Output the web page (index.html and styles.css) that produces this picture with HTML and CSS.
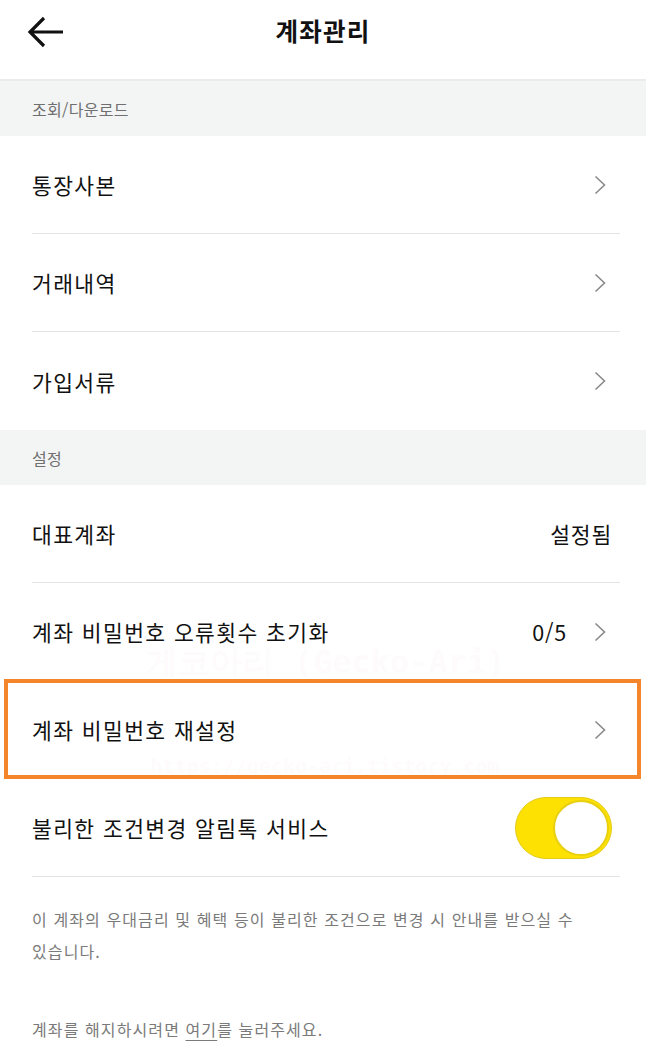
FILE: index.html
```html
<!DOCTYPE html>
<html lang="ko">
<head>
<meta charset="utf-8">
<title>계좌관리</title>
<link rel="stylesheet" href="styles.css">
</head>
<body>
<div class="page">
  <header class="topbar">
    <button class="back" aria-label="뒤로">
      <svg width="36" height="32" viewBox="0 0 36 32"><path d="M36 16H3M17 2L3 16l14 14" fill="none" stroke="#111" stroke-width="3.2"/></svg>
    </button>
    <h1 class="title">계좌관리</h1>
  </header>

  <div class="section-head">조회/다운로드</div>
  <ul class="list">
    <li class="row"><span class="label">통장사본</span><span class="right"><svg class="chev" width="12" height="20" viewBox="0 0 12 20"><path d="M1.5 1.5l9 8.5-9 8.5" fill="none" stroke="#8a8a8a" stroke-width="1.6"/></svg></span></li>
    <li class="row"><span class="label">거래내역</span><span class="right"><svg class="chev" width="12" height="20" viewBox="0 0 12 20"><path d="M1.5 1.5l9 8.5-9 8.5" fill="none" stroke="#8a8a8a" stroke-width="1.6"/></svg></span></li>
    <li class="row"><span class="label">가입서류</span><span class="right"><svg class="chev" width="12" height="20" viewBox="0 0 12 20"><path d="M1.5 1.5l9 8.5-9 8.5" fill="none" stroke="#8a8a8a" stroke-width="1.6"/></svg></span></li>
  </ul>

  <div class="section-head">설정</div>
  <ul class="list">
    <li class="row"><span class="label">대표계좌</span><span class="right plain"><span class="value">설정됨</span></span></li>
    <li class="row"><span class="label">계좌 비밀번호 오류횟수 초기화</span><span class="right"><span class="value">0/5</span><svg class="chev" width="12" height="20" viewBox="0 0 12 20"><path d="M1.5 1.5l9 8.5-9 8.5" fill="none" stroke="#8a8a8a" stroke-width="1.6"/></svg></span></li>
    <li class="row highlighted"><span class="label">계좌 비밀번호 재설정</span><span class="right"><svg class="chev" width="12" height="20" viewBox="0 0 12 20"><path d="M1.5 1.5l9 8.5-9 8.5" fill="none" stroke="#8a8a8a" stroke-width="1.6"/></svg></span></li>
    <li class="row"><span class="label">불리한 조건변경 알림톡 서비스</span><span class="toggle"><span class="knob"></span></span></li>
  </ul>

  <div class="notes">
    <p class="note">이 계좌의 우대금리 및 혜택 등이 불리한 조건으로 변경 시 안내를 받으실 수 있습니다.</p>
    <p class="note last">계좌를 해지하시려면 <span class="link">여기</span>를 눌러주세요.</p>
  </div>

  <div class="wm wm1">게코아리 (Gecko-Ari)</div>
  <div class="wm wm2">https://gecko-ari.tistory.com</div>
</div>
</body>
</html>
```
FILE: styles.css
```css
* { box-sizing: border-box; }
html, body { margin: 0; padding: 0; background: #fff; }
body {
  font-family: "Noto Sans CJK KR", "Noto Sans", "Liberation Sans", sans-serif;
  color: #111;
}
.page { position: relative; width: 646px; min-height: 1048px; overflow: hidden; }

.topbar {
  position: relative;
  height: 81px;
  display: flex;
  align-items: center;
  justify-content: center;
  border-bottom: 2px solid #ebebeb;
}
.back {
  position: absolute;
  left: 27px;
  top: 16px;
  padding: 0;
  border: 0;
  background: none;
  display: flex;
}
.title {
  margin: 0 0 18px;
  font-size: 24.5px;
  font-weight: 700;
  letter-spacing: 1.2px;
}

.section-head {
  height: 55px;
  background: #f3f4f4;
  padding-left: 32px;
  display: flex;
  align-items: center;
  font-size: 16px;
  color: #6f6f6f;
  letter-spacing: 0.3px;
}

.list { list-style: none; margin: 0; padding: 0; }
.row {
  height: 98px;
  margin: 0 26px 0 32px;
  display: flex;
  align-items: center;
  justify-content: space-between;
  border-bottom: 1.5px solid #e4e4e4;
  position: relative;
}
.list .row:last-child { border-bottom: 0; }
.list:last-of-type .row:last-child { border-bottom: 1.5px solid #e4e4e4; }
.label { font-size: 21.5px; font-weight: 400; letter-spacing: 1.4px; color: #111; }
.right { display: flex; align-items: center; gap: 27px; padding-right: 14px; }
.right.plain { padding-right: 8px; }
.value { font-size: 21.5px; font-weight: 400; letter-spacing: 0.8px; }

.highlighted::before {
  content: "";
  position: absolute;
  left: -28px;
  right: -21px;
  top: -2px;
  bottom: -1px;
  border: 4px solid #f5852b;
  pointer-events: none;
}

.toggle {
  width: 97px;
  height: 62px;
  border-radius: 31px;
  background: #fde102;
  border: 1.5px solid #e4cb1a;
  margin-right: 8px;
  display: flex;
  align-items: center;
  justify-content: flex-end;
  padding-right: 2px;
}
.knob {
  width: 56px;
  height: 56px;
  border-radius: 50%;
  background: #fff;
  border: 2px solid #e8cf10;
}

.notes { padding: 26px 32px 0; }
.note {
  margin: 0;
  font-size: 16px;
  line-height: 32px;
  color: #7a7a7a;
  letter-spacing: 1.1px;
  word-break: keep-all;
  padding-right: 20px;
}
.note.last { margin-top: 46px; }
.link { text-decoration: underline; text-underline-offset: 4px; }

.wm {
  position: absolute;
  left: 0;
  right: 0;
  text-align: center;
  line-height: 1;
  color: rgba(200, 150, 150, 0.05);
  font-family: "DejaVu Sans Mono", monospace;
  pointer-events: none;
}
.wm1 { top: 646px; font-size: 32px; font-weight: 700; padding-left: 6px; }
.wm2 { top: 756px; font-size: 20px; font-weight: 700; padding-left: 4px; }
```
